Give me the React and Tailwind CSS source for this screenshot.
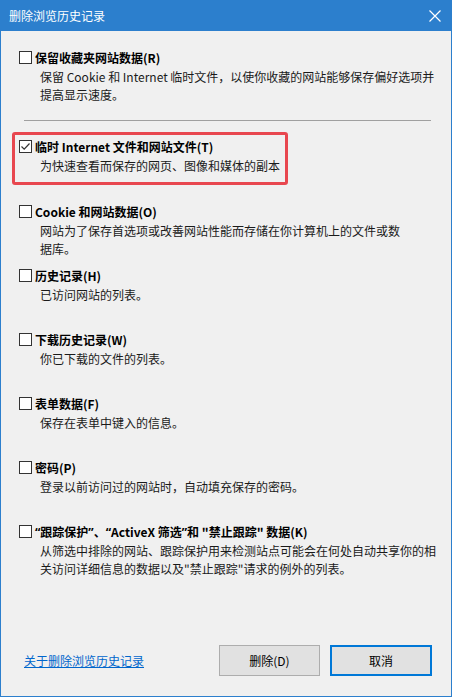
import React, { useState } from "react";

const Q = ({ children }) => <span style={{ fontFamily: '"Noto Sans", sans-serif' }}>{children}</span>;

const items = [
  {
    key: "cookie",
    title: "Cookie 和网站数据(O)",
    desc: ["网站为了保存首选项或改善网站性能而存储在你计算机上的文件或数", "据库。"],
  },
  { key: "history", title: "历史记录(H)", desc: ["已访问网站的列表。"] },
  { key: "downloads", title: "下载历史记录(W)", desc: ["你已下载的文件的列表。"] },
  { key: "forms", title: "表单数据(F)", desc: ["保存在表单中键入的信息。"] },
  { key: "passwords", title: "密码(P)", desc: ["登录以前访问过的网站时，自动填充保存的密码。"] },
  {
    key: "tracking",
    title: (
      <>
        <Q>“</Q>跟踪保护<Q>”</Q>、<Q>“</Q>ActiveX 筛选<Q>”</Q>和 "禁止跟踪" 数据(K)
      </>
    ),
    desc: [
      "从筛选中排除的网站、跟踪保护用来检测站点可能会在何处自动共享你的相",
      "关访问详细信息的数据以及\"禁止跟踪\"请求的例外的列表。",
    ],
  },
];

function Checkbox({ checked, onChange }) {
  return (
    <button
      onClick={onChange}
      className="w-[13px] h-[13px] shrink-0 border border-[#333333] bg-white flex items-center justify-center mt-[2px]"
    >
      {checked && (
        <svg width="11" height="11" viewBox="0 0 11 11">
          <path d="M1.5 5.5 L4.2 8.2 L9.5 2.5" fill="none" stroke="#333333" strokeWidth="1.2" />
        </svg>
      )}
    </button>
  );
}

function Option({ title, desc, checked, onToggle }) {
  return (
    <div className="flex">
      <Checkbox checked={checked} onChange={onToggle} />
      <div className="ml-[3px]">
        <div className="h-[18px] leading-[18px] font-bold text-black whitespace-nowrap">{title}</div>
        <div className="mt-[1px] ml-[5px]">
          {desc.map((line, i) => (
            <div key={i} className="h-[18px] leading-[18px] whitespace-nowrap text-[#1a1a1a]">
              {line}
            </div>
          ))}
        </div>
      </div>
    </div>
  );
}

export default function App() {
  const [checked, setChecked] = useState({ favorites: false, temp: true });
  const toggle = (k) => setChecked({ ...checked, [k]: !checked[k] });

  return (
    <div
      className="w-[452px] h-[697px] flex flex-col text-[12px] bg-[#f0f0f0]"
      style={{ fontFamily: '"Noto Sans CJK SC", "Noto Sans", sans-serif' }}
    >
      <div className="h-[31px] shrink-0 bg-[#2c7fcd] flex items-center justify-between pl-[9px] pr-[11px]">
        <span className="text-white text-[12px]">删除浏览历史记录</span>
        <svg width="12" height="12" viewBox="0 0 12 12">
          <path d="M0.5 0.5 L11.5 11.5 M11.5 0.5 L0.5 11.5" stroke="white" strokeWidth="1.2" />
        </svg>
      </div>

      <div className="flex-1 flex flex-col border-x border-b border-[#2c7fcd] pt-[18px]">
        <div className="pl-[18px]">
          <Option
            title="保留收藏夹网站数据(R)"
            desc={["保留 Cookie 和 Internet 临时文件，以使你收藏的网站能够保存偏好选项并", "提高显示速度。"]}
            checked={checked.favorites}
            onToggle={() => toggle("favorites")}
          />
        </div>

        <div className="ml-[23px] w-[407px] h-[1px] bg-[#a0a0a0] mt-[16px]" />

        <div className="ml-[11px] mt-[11px] w-[276px] h-[53px] border-[3px] border-[#e8474f] rounded-[3px] pl-[4px] pt-[3px]">
          <Option
            title="临时 Internet 文件和网站文件(T)"
            desc={["为快速查看而保存的网页、图像和媒体的副本"]}
            checked={checked.temp}
            onToggle={() => toggle("temp")}
          />
        </div>

        <div className="pl-[18px] mt-[18px] flex flex-col">
          {items.map((it) => (
            <div key={it.key} className="h-[64px]">
              <Option
                title={it.title}
                desc={it.desc}
                checked={!!checked[it.key]}
                onToggle={() => toggle(it.key)}
              />
            </div>
          ))}
        </div>

        <div className="mt-auto flex items-center justify-between pl-[23px] pr-[19px] pb-[20px]">
          <a href="#" className="text-[#0066cc] underline">关于删除浏览历史记录</a>
          <div className="flex gap-[10px]">
            <button className="w-[101px] h-[31px] bg-[#e1e1e1] border border-[#adadad] text-black">删除(D)</button>
            <button className="w-[102px] h-[31px] bg-[#e1e1e1] border-2 border-[#0078d7] text-black">取消</button>
          </div>
        </div>
      </div>
    </div>
  );
}
